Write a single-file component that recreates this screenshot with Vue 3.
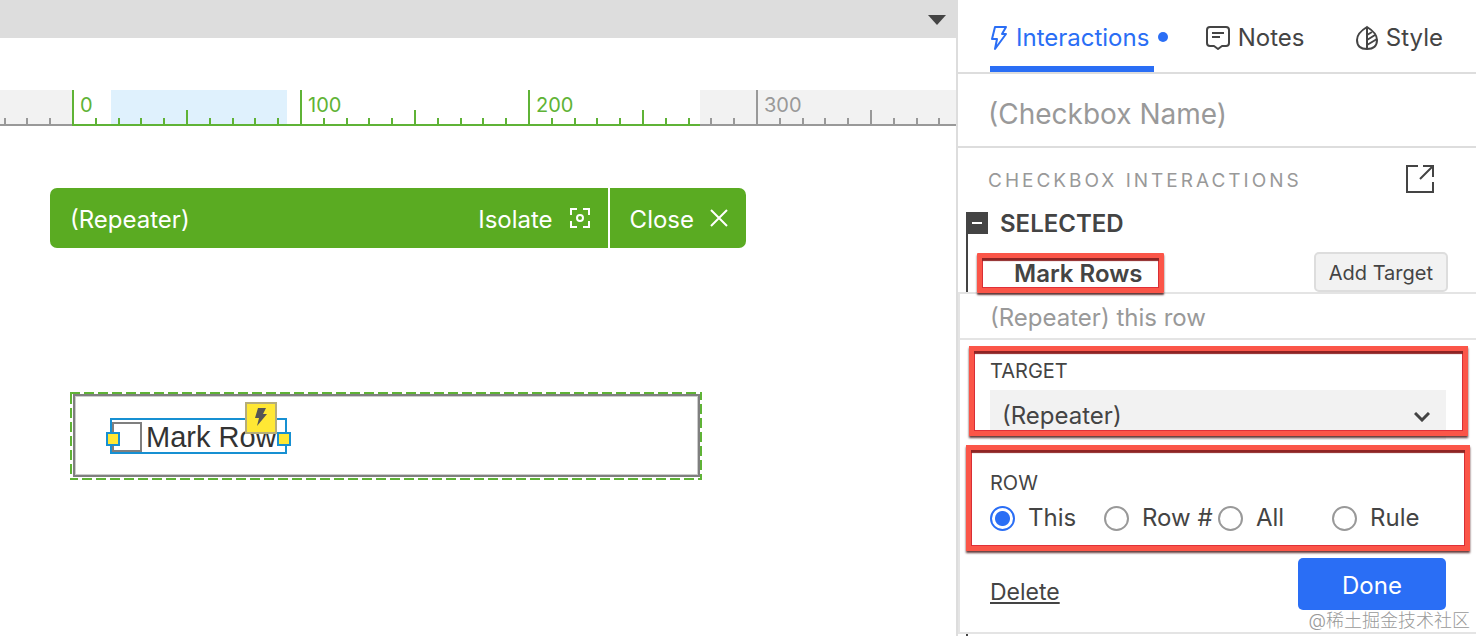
<template>
  <div class="workspace">
    <main class="stage">
      <div class="page-bar">
        <button class="page-menu" aria-label="Pages">
          <svg width="18" height="10" viewBox="0 0 18 10"><path d="M0 0H18L9 10Z" fill="#444" /></svg>
        </button>
      </div>

      <svg class="ruler" width="100%" height="36">
        <rect width="100%" height="36" fill="#f2f2f2" />
        <rect :x="origin" width="628" height="36" fill="#fff" />
        <rect x="111" width="176" height="36" fill="#dff1fd" />
        <rect y="34" width="100%" height="2" fill="#999" />
        <rect :x="origin" y="34" width="628" height="2" fill="#5fb336" />
        <g v-for="t in ticks" :key="t.x" :fill="t.active ? '#5fb336' : '#999'">
          <rect :x="t.x" :y="t.top" width="2" :height="36 - t.top" />
          <text v-if="t.label !== null" :x="t.x + 8" y="22">{{ t.label }}</text>
        </g>
      </svg>

      <div class="repeater-bar">
        <span class="repeater-name">(Repeater)</span>
        <button class="bar-btn">
          Isolate
          <svg width="22" height="22" viewBox="0 0 22 22" fill="none" stroke="#fff" stroke-width="2">
            <path d="M2 8V2H8M14 2H20V8M20 14V20H14M8 20H2V14" />
            <circle cx="11" cy="11" r="3" />
          </svg>
        </button>
        <button class="bar-btn close">
          Close
          <svg width="18" height="18" viewBox="0 0 18 18" fill="none" stroke="#fff" stroke-width="2">
            <path d="M1 1L17 17M17 1L1 17" />
          </svg>
        </button>
      </div>

      <div class="repeater">
        <svg class="dashes" width="100%" height="100%">
          <rect x="0" y="0" width="100%" height="100%" />
        </svg>
        <div class="repeater-cell">
          <label class="widget">
            <input v-model="marked" type="checkbox" />
            <span>Mark Row</span>
            <i class="handle left"></i>
            <i class="handle right"></i>
            <span class="badge">
              <svg width="14" height="18" viewBox="0 0 14 18"><path d="M4 0H12L9 6H13L3 18L5 10H1Z" fill="#555" /></svg>
            </span>
          </label>
        </div>
      </div>
    </main>

    <aside class="panel">
      <nav class="tabs">
        <button
          v-for="tab in tabs"
          :key="tab"
          :class="['tab', { active: tab === activeTab }]"
          @click="activeTab = tab"
        >
          <svg v-if="tab === 'Interactions'" width="18" height="26" viewBox="0 0 18 26" fill="none" stroke="currentColor" stroke-width="2" stroke-linejoin="round">
            <path d="M5 2H16L12 9H16L5 24L7 14H2Z" />
          </svg>
          <svg v-else-if="tab === 'Notes'" width="24" height="26" viewBox="0 0 24 26" fill="none" stroke="currentColor" stroke-width="2" stroke-linejoin="round">
            <path d="M4 2H20Q23 2 23 5V18Q23 21 20 21H16L12 24L8 21H4Q1 21 1 18V5Q1 2 4 2Z" />
            <path d="M6 8H18M6 12H14" />
          </svg>
          <svg v-else width="22" height="26" viewBox="0 0 22 26" fill="none" stroke="currentColor" stroke-width="2">
            <path d="M11 2C6 5 1 10 1 15C1 21 5 24 11 24C17 24 21 21 21 15C21 10 16 5 11 2ZM11 2V24" />
            <path d="M11 10L16 7M11 15L19 10M11 20L21 14" />
          </svg>
          {{ tab }}
          <i v-if="tab === 'Interactions'" class="dot"></i>
        </button>
      </nav>

      <input v-model="name" class="name" type="text" placeholder="(Checkbox Name)" aria-label="Checkbox name" />

      <div class="section-head">
        <h2>CHECKBOX INTERACTIONS</h2>
        <button class="icon-btn" aria-label="Open interaction editor">
          <svg width="28" height="28" viewBox="0 0 28 28" fill="none" stroke="#444" stroke-width="2">
            <path d="M12 1H1V27H27V17M17 1H27V12M27 1L14 14" />
          </svg>
        </button>
      </div>

      <div class="event">
        <button class="toggle" aria-label="Collapse"></button>
        <h3>SELECTED</h3>
      </div>

      <div class="action">
        <strong class="marked">Mark Rows</strong>
        <button class="add-target">Add Target</button>
      </div>

      <section class="editor">
        <p class="summary">(Repeater) this row</p>

        <div class="field target marked">
          <label for="target">TARGET</label>
          <div class="select">
            <select id="target" v-model="target">
              <option>(Repeater)</option>
            </select>
            <svg width="16" height="10" viewBox="0 0 16 10" fill="none" stroke="#444" stroke-width="3"><path d="M1 1L8 8L15 1" /></svg>
          </div>
        </div>

        <fieldset class="field rows marked">
          <legend>ROW</legend>
          <div class="radios">
            <label v-for="r in rowOptions" :key="r">
              <input v-model="row" type="radio" name="row" :value="r" />
              {{ r }}
            </label>
          </div>
        </fieldset>

        <div class="actions">
          <a href="#">Delete</a>
          <button class="done">Done</button>
        </div>
      </section>
      <div class="tree-end"></div>
      <span class="watermark">@稀土掘金技术社区</span>
    </aside>
  </div>
</template>

<script setup>
import { ref } from 'vue'

const tabs = ['Interactions', 'Notes', 'Style']
const activeTab = ref('Interactions')
const name = ref('')
const marked = ref(false)
const target = ref('(Repeater)')
const rowOptions = ['This', 'Row #', 'All', 'Rule']
const row = ref('This')

// ruler: 100 units = 228px, one tick every 10 units
const origin = 72
const ticks = []
for (let n = -3; n < 39; n++) {
  const major = n % 10 === 0
  ticks.push({
    x: Math.round(origin + n * 22.8),
    top: major ? 0 : n % 5 === 0 ? 20 : 28,
    label: major ? n * 10 : null,
    active: n >= 0 && n < 28
  })
}
</script>

<style>
body { margin: 0; }
</style>

<style scoped>
.workspace { display: flex; min-height: 100vh; background: #fff; color: #444; font-family: Inter, "Noto Sans CJK SC", sans-serif; font-size: 24px; line-height: 30px; }
.workspace * { box-sizing: border-box; }
button, input, select { font: inherit; color: inherit; margin: 0; }
button { border: 0; padding: 0; background: none; cursor: pointer; }
svg { display: block; flex: none; }
h2, h3, p { margin: 0; }

.stage { flex: 1; min-width: 0; }
.page-bar { display: flex; justify-content: flex-end; align-items: center; height: 38px; padding: 2px 10px 0 0; background: #ddd; }
.ruler { margin-top: 52px; font-size: 20px; }

.repeater-bar { display: flex; width: 696px; height: 60px; margin: 62px 0 0 50px; border-radius: 7px; overflow: hidden; background: #5aab22; color: #fff; }
.repeater-name { flex: 1; padding-left: 20px; line-height: 64px; }
.bar-btn { display: flex; align-items: center; gap: 16px; padding: 4px 17px 0; }
.bar-btn.close { padding: 4px 18px 0 20px; border-left: 2px solid #fff; }
.bar-btn svg { margin-bottom: 4px; }

.repeater { position: relative; width: 632px; height: 88px; margin: 144px 0 0 70px; padding: 2px 2px 2px 3px; }
.dashes { position: absolute; inset: 0; }
.dashes rect { fill: none; stroke: #5fb336; stroke-width: 4; stroke-dasharray: 10 4; }
.repeater-cell { position: relative; height: 83px; padding: 22px 35px; border: 2px solid #7f7f7f; box-shadow: inset 0 0 0 1px #ccc; background: #fff; }
.widget { position: relative; display: inline-flex; align-items: center; height: 36px; border: 2px solid #1790d2; padding-right: 8px; font-family: "Liberation Sans", Arial, sans-serif; font-size: 29px; color: #333; }
.widget input { appearance: none; width: 30px; height: 30px; margin: 2px 4px 0 0; border: 2px solid #7f7f7f; }
.widget > span { padding-top: 2px; }
.handle { position: absolute; top: 12px; width: 14px; height: 14px; border: 2px solid #1790d2; background: #ffe834; }
.handle.left { left: -6px; }
.handle.right { right: -6px; }
.widget > .badge { position: absolute; top: -18px; right: 8px; display: flex; align-items: center; justify-content: center; width: 32px; height: 32px; padding: 0; border: 2px solid #b5ad7a; background: #ffe834; }
.badge svg { margin-bottom: 3px; }

.panel { position: relative; display: flex; flex-direction: column; width: 520px; border-left: 2px solid #ddd; }
.tabs { display: flex; justify-content: space-between; height: 74px; padding: 0 33px 0 32px; border-bottom: 2px solid #ddd; }
.tab { position: relative; display: flex; align-items: center; gap: 8px; padding: 4px 0 0; }
.tab.active { padding: 10px 5px 0 0; border-bottom: 6px solid #2a6ef5; color: #2a6ef5; }
.dot { position: absolute; top: 32px; right: -14px; width: 10px; height: 10px; border-radius: 50%; background: #2a6ef5; }
.name { width: 100%; height: 74px; padding: 8px 30px 0; border: 0; border-bottom: 2px solid #ddd; background: none; outline: none; font-size: 28px; }
.name::placeholder { color: #999; opacity: 1; }

.section-head { display: flex; align-items: center; justify-content: space-between; height: 62px; padding: 0 42px 0 30px; }
.section-head h2 { padding-top: 4px; font-size: 19px; font-weight: 400; letter-spacing: 3px; color: #999; }
.event { display: flex; align-items: center; gap: 12px; height: 22px; margin: 2px 0 0 8px; }
.event h3 { padding-top: 2px; font-size: 24px; font-weight: 600; }
.toggle { display: flex; align-items: center; justify-content: center; width: 22px; height: 22px; background: #444; }
.toggle::before { content: ""; width: 10px; height: 2px; background: #fff; }
.action { display: flex; align-items: flex-end; justify-content: space-between; height: 58px; margin-left: 8px; padding: 0 28px 0 9px; border-left: 2px solid #444; }
.action strong { height: 40px; padding: 0 22px 0 37px; font-weight: 600; line-height: 44px; }
.add-target { height: 40px; padding: 2px 13px 0; border: 2px solid #ddd; border-radius: 5px; background: #f2f2f2; font-size: 20px; }

.editor { border: solid #e4e4e4; border-width: 2px 0 2px 2px; }
.summary { height: 46px; padding-left: 30px; border-bottom: 2px solid #e4e4e4; line-height: 48px; color: #999; }
.field { margin: 0; border: 0; padding: 0 30px; }
.field > label, .field > legend { display: block; padding: 0; font-size: 20px; line-height: 22px; }
.target { padding-top: 20px; }
.select { position: relative; margin-top: 8px; }
.select select { appearance: none; display: block; width: 100%; height: 50px; padding: 2px 12px 0; border: 0; border-radius: 0; background: #f2f2f2; }
.select svg { position: absolute; top: 22px; right: 16px; }
.rows { padding-top: 32px; padding-bottom: 28px; }
.rows legend { float: left; width: 100%; }
.radios { display: grid; grid-template-columns: repeat(4, 1fr); clear: both; padding-top: 12px; }
.radios label { display: flex; align-items: center; gap: 13px; height: 24px; white-space: nowrap; }
.radios input { appearance: none; flex: none; width: 25px; height: 25px; border: 2px solid #999; border-radius: 50%; }
.radios input:checked { border-color: #2a6ef5; background: radial-gradient(circle, #2a6ef5 7px, #fff 8px); }

.actions { display: flex; align-items: flex-end; justify-content: space-between; padding: 0 30px 22px; }
.actions a { color: inherit; font-size: 23px; line-height: 36px; text-decoration: underline; text-decoration-thickness: 2px; text-underline-offset: 2px; }
.done { width: 148px; height: 52px; padding-top: 3px; border-radius: 5px; background: #2a6ef5; color: #fff; }
.tree-end { flex: 1; margin-left: 8px; border-left: 2px solid #444; }

/* red callouts around the settings that matter */
.marked { position: relative; }
.marked::after { content: ""; position: absolute; inset: 1px 0 -1px; border: 5px solid #fb5548; box-shadow: 0 2px 2px rgba(60, 10, 10, .8), inset 0 3px 1px #8e2424, inset 0 0 0 1px #e03038; pointer-events: none; }
.action .marked::after { border-radius: 1px; }
.target.marked::after { inset: 6px 8px 4px 9px; }
.rows.marked::after { inset: 5px 6px 7px; }

.watermark { position: absolute; right: 6px; bottom: 3px; font-size: 18px; line-height: 24px; font-weight: 300; color: #999; text-shadow: 0 0 1px #fff; }
</style>
